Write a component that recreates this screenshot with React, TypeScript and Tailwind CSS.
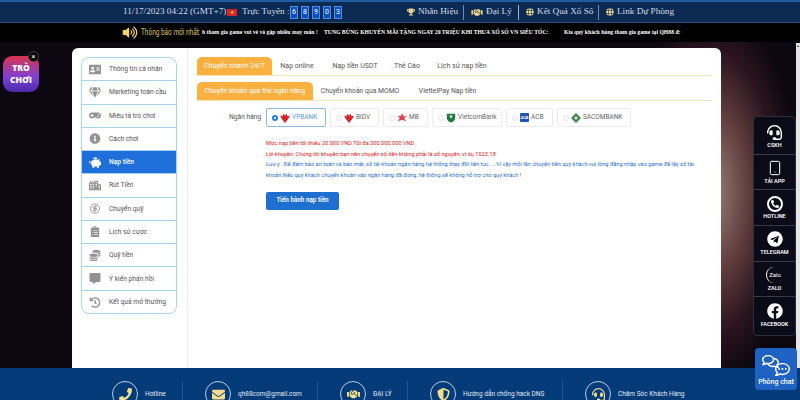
import {
  FaAddressCard,
  FaCity,
  FaClipboardList,
  FaCommentAlt,
  FaEnvelope,
  FaFacebook,
  FaGamepad,
  FaGem,
  FaHandshake,
  FaHeadset,
  FaHistory,
  FaInfoCircle,
  FaPhone,
  FaPiggyBank,
  FaRegCommentDots,
  FaRegComments,
  FaShieldAlt,
  FaTelegram,
  FaTrophy,
  FaVolumeUp,
  FaCoins,
  FaGlobe,
} from "react-icons/fa";
import { CircleDollarSign, Smartphone } from "lucide-react";

const sidebar = [
  { label: "Thông tin cá nhân", icon: FaAddressCard },
  { label: "Marketing toàn cầu", icon: FaGem },
  { label: "Miêu tả trò chơi", icon: FaGamepad },
  { label: "Cách chơi", icon: FaInfoCircle },
  { label: "Nạp tiền", icon: FaPiggyBank, active: true },
  { label: "Rút Tiền", icon: FaCity },
  { label: "Chuyển quỹ", icon: CircleDollarSign },
  { label: "Lịch sử cược", icon: FaClipboardList },
  { label: "Quỹ tiền", icon: FaCoins },
  { label: "Ý kiến phản hồi", icon: FaCommentAlt },
  { label: "Kết quả mở thưởng", icon: FaHistory },
];

const banks = [
  { name: "VPBANK", width: "w-[60px]", logo: "text-[#d8232a]", selected: true },
  { name: "BIDV", width: "w-[49px]", logo: "text-[#d8232a]" },
  { name: "MB", width: "w-[45px]", logo: "text-[#e0394a]" },
  { name: "VietcomBank", width: "w-[70px]", logo: "text-[#1f7a3d]" },
  { name: "ACB", width: "w-[47px]", logo: "text-[#1f55b0]" },
  { name: "SACOMBANK", width: "w-[74px]", logo: "text-[#3f8a4a]" },
];

const footer = [
  { label: "Hotline", icon: FaPhone, width: "w-[93px]" },
  { label: "qh88com@gmail.com", icon: FaEnvelope, width: "w-[135px]" },
  { label: "ĐẠI LÝ", icon: FaHandshake, width: "w-[90px]" },
  { label: "Hướng dẫn chống hack DNS", icon: FaShieldAlt, width: "w-[155px]" },
  { label: "Chăm Sóc Khách Hàng", icon: FaHeadset, width: "w-[150px]" },
];

const BankLogo = ({ name, className }: { name: string; className: string }) => {
  if (name === "ACB") {
    return (
      <span className="flex h-[9px] w-[9px] shrink-0 items-center justify-center rounded-[1px] bg-[#1f55b0] text-[4px] font-bold text-white">
        ACB
      </span>
    );
  }
  return (
    <svg viewBox="0 0 12 12" className={`h-[10px] w-[10px] shrink-0 fill-current ${className}`}>
      {name === "VietcomBank" && <path d="M1 1h10v5c0 3-3 5-5 5.500C4 11 1 9 1 6zM4 3l2 4 2-4z" />}
      {name === "SACOMBANK" && <path d="M6 0l6 6-6 6-6-6zM6 4L4 6l2 2 2-2z" />}
      {name === "MB" && <path d="M6 0l1.500 4L12 3 8.500 6 11 10 6 8l-5 2 2.500-4L0 3l4.500 1z" />}
      {(name === "VPBANK" || name === "BIDV") && (
        <path d="M6 12L2 7 0 3l3 1 1-3 2 2 2-2 1 3 3-1-2 4z" />
      )}
    </svg>
  );
};

const SocialItem = ({ label, children, last }: { label: string; children: React.ReactNode; last?: boolean }) => (
  <div className={`flex h-[35.700px] flex-col items-center justify-center ${last ? "" : "border-b border-[#3a3a48]"}`}>
    <span className="flex h-[17px] items-center justify-center">{children}</span>
    <span className="mt-[1px] whitespace-nowrap text-[5.500px] font-semibold leading-[7px]">{label}</span>
  </div>
);

const App = () => {
  return (
    <div className="relative flex h-[400px] w-[800px] flex-col overflow-hidden bg-[#0b0610] font-['Roboto',sans-serif]">
      {/* Top bar */}
      <header className="flex h-[23px] items-center whitespace-nowrap border-t-2 border-b border-t-[#1b5c9e] border-b-[#2b4f78] bg-[#0c2a52] pl-[123px] font-['Liberation_Serif',serif] text-[9.200px] text-[#d5dbe4]">
        <span className="w-[104px] shrink-0">11/17/2023 04:22 (GMT+7)</span>
        <span className="flex h-[7px] w-[10px] shrink-0 items-center justify-center bg-[#d8232a] text-[5px] leading-none text-[#ffd83a]">★</span>
        <span className="ml-[5px] w-[48px] shrink-0">Trực Tuyến :</span>
        <div className="flex shrink-0 gap-[3px]">
          {[6, 8, 9, 0, 3].map((digit, i) => (
            <span key={i} className="flex h-[13px] w-[8px] items-center justify-center border border-[#4d8fe0] bg-[#0b4fc0] font-['Roboto',sans-serif] text-[7px] text-white">
              {digit}
            </span>
          ))}
        </div>
        <nav className="ml-[65px] flex shrink-0 items-center">
          <FaTrophy className="h-[8px] w-[8px] text-[#e8d48a]" />
          <span className="ml-[3px] w-[38px]">Nhãn Hiệu</span>
          <span className="mx-[7px] h-[15px] w-px bg-[#6f8db0]" />
          <FaHandshake className="h-[9px] w-[12px] text-[#e8d48a]" />
          <span className="ml-[3px] w-[25px]">Đại Lý</span>
          <span className="mx-[7px] h-[15px] w-px bg-[#9fb6d0]" />
          <FaGlobe className="h-[8px] w-[8px] text-[#e8d48a]" />
          <span className="ml-[3px] w-[54px]">Kết Quả Xổ Số</span>
          <span className="mx-[7px] h-[15px] w-px bg-[#6f8db0]" />
          <FaGlobe className="h-[8px] w-[8px] text-[#e8d48a]" />
          <span className="ml-[3px]">Link Dự Phòng</span>
        </nav>
      </header>

      {/* Ticker */}
      <div className="flex h-[19px] items-center overflow-hidden whitespace-nowrap bg-black pl-[122px] font-['Liberation_Serif',serif] text-[5.700px] font-bold text-white">
        <FaVolumeUp className="h-[13px] w-[16px] shrink-0 text-[#f3d36b]" />
        <span className="ml-[3px] w-[61px] shrink-0 origin-left scale-x-[0.72] font-['Roboto',sans-serif] text-[9px] font-normal text-[#d9c46a]">Thông báo mới nhất:</span>
        <span className="w-[122px] shrink-0">h tham gia game vui vẻ và gặp nhiều may mắn !</span>
        <span className="w-[240px] shrink-0">TUNG BỪNG KHUYẾN MÃI TẶNG NGAY 20 TRIỆU KHI THUA XỔ SỐ VN SIÊU TỐC:</span>
        <span className="shrink-0">Kìa quý khách hàng tham gia game tại QH88 đ:</span>
      </div>

      {/* Main */}
      <main className="flex min-h-0 flex-1 bg-[radial-gradient(ellipse_85px_190px_at_712px_150px,#9a8078_0%,#5c3a3a_45%,#2a141e_75%,#0d0712_100%)] pl-[72px] pt-[6px]">
        <div className="flex h-[320px] w-[649px] shrink-0 rounded-t-[6px] bg-white pl-[9px]">
          {/* Sidebar */}
          <aside className="mt-[9px] h-[257px] w-[96px] shrink-0 overflow-hidden rounded-[8px] border border-[#a6d3ee]">
            {sidebar.map((item) => {
              const Icon = item.icon;
              return (
                <div
                  key={item.label}
                  className={`flex h-[23.270px] items-center whitespace-nowrap border-b border-[#a6d3ee] pl-[6px] text-[6.700px] last:border-b-0 ${item.active ? "bg-[#1e6fd9] font-medium text-white" : "text-[#555]"}`}
                >
                  <span className="flex w-[14px] shrink-0 justify-center">
                    <Icon className={`h-[11px] w-[12px] ${item.active ? "text-white" : "text-[#929292]"}`} />
                  </span>
                  <span className="ml-[7px]">{item.label}</span>
                </div>
              );
            })}
          </aside>

          {/* Content */}
          <section className="ml-[10px] min-w-0 flex-1 border-l border-[#ececec] px-[9px] pt-[9px]">
            <div className="flex h-[19px] whitespace-nowrap border-b border-[#f5e6b8] text-[7px] text-[#555]">
              <span className="flex w-[75px] items-center justify-center rounded-t-[5px] bg-[#fbb040] text-white">Chuyển nhanh 24/7</span>
              <span className="flex w-[50px] items-center justify-center">Nạp online</span>
              <span className="flex w-[66px] items-center justify-center">Nạp tiền USDT</span>
              <span className="flex w-[38px] items-center justify-center">Thẻ Cào</span>
              <span className="ml-[2px] flex w-[68px] items-center justify-center">Lịch sử nạp tiền</span>
            </div>
            <div className="mt-[6px] flex h-[19px] whitespace-nowrap border-b border-[#f5e6b8] text-[6.800px] text-[#555]">
              <span className="flex w-[116px] items-center justify-center rounded-t-[5px] bg-[#fbb040] text-white">Chuyển khoản qua thẻ ngân hàng</span>
              <span className="flex w-[94px] items-center justify-center">Chuyển khoản qua MOMO</span>
              <span className="flex w-[81px] items-center justify-center">ViettelPay Nạp tiền</span>
            </div>

            <div className="mt-[7px] flex h-[19px] items-center text-[7px] text-[#555]">
              <span className="ml-[32px] w-[37px] shrink-0 whitespace-nowrap text-[6.700px]">Ngân hàng</span>
              <div className="flex gap-[4px]">
                {banks.map((bank) => (
                  <div
                    key={bank.name}
                    className={`flex h-[19px] shrink-0 items-center rounded-[2px] border pl-[5px] ${bank.width} ${bank.selected ? "border-[#8fb8e0]" : "border-[#ececec]"}`}
                  >
                    <span className={`mr-[2px] h-[6px] w-[6px] shrink-0 rounded-full ${bank.selected ? "border-2 border-[#2a7fd6] bg-white" : "border border-[#e4e4e4]"}`} />
                    <BankLogo name={bank.name} className={bank.logo} />
                    <span className={`ml-[2px] whitespace-nowrap text-[6.500px] ${bank.selected ? "text-[#5b9bdc]" : "text-[#666]"}`}>{bank.name}</span>
                  </div>
                ))}
              </div>
            </div>

            <div className="ml-[69px] mt-[11px] whitespace-nowrap text-[5.650px] leading-[10.700px]">
              <p className="text-[#e02020]">Mức nạp tiền tối thiểu 20.000 VND Tối đa 300.000.000 VND</p>
              <p className="text-[#e02020]">Lời khuyên: Chúng tôi khuyên bạn nên chuyển số tiền không phải là số nguyên, ví dụ 1023.18</p>
              <p className="text-[#2a6fd0]">Lưu ý : Để đảm bảo an toàn và bảo mật, số tài khoản ngân hàng hệ thống thay đổi liên tục ....Vì vậy mỗi lần chuyển tiền quý khách vui lòng đăng nhập vào game để lấy số tài</p>
              <p className="text-[#2a6fd0]">khoản.Nếu quý khách chuyển khoản vào ngân hàng đã đóng, hệ thống sẽ không hỗ trợ cho quý khách !</p>
            </div>

            <button className="ml-[69px] mt-[11px] h-[18px] w-[73px] whitespace-nowrap rounded-[2px] bg-[#1f6fd0] text-[6.300px] font-semibold text-white">
              Tiến hành nạp tiền
            </button>
          </section>
        </div>
      </main>

      {/* Footer */}
      <footer className="flex h-[32px] shrink-0 items-start bg-[#033a78] pl-[90px] pt-[13px]">
        {footer.map((item, i) => {
          const Icon = item.icon;
          return (
            <div key={item.label} className={`flex h-[19px] shrink-0 items-start pl-[22px] ${item.width} ${i < footer.length - 1 ? "border-r border-[#1d5590]" : ""}`}>
              <span className="flex h-[26px] w-[26px] shrink-0 items-center justify-center rounded-full border border-[#b8cde2]">
                <Icon className="h-[13px] w-[13px] text-[#f3dd8c]" />
              </span>
              <span className="ml-[7px] mt-[8px] whitespace-nowrap text-[6.500px] leading-[10px] text-[#e3ebf5]">{item.label}</span>
            </div>
          );
        })}
      </footer>

      {/* Floating game badge */}
      <div className="absolute left-[3px] top-[56px] flex h-[36px] w-[36px] flex-col items-center justify-center rounded-[9px] bg-[linear-gradient(180deg,#d9344f_0%,#7d3fd6_60%,#4a2aa8_100%)] font-['Open_Sans',sans-serif] text-[8.500px] font-extrabold leading-[12px] text-white">
        <span>TRÒ</span>
        <span>CHƠI</span>
      </div>
      <span className="absolute left-[28px] top-[51px] flex h-[11px] w-[11px] items-center justify-center rounded-full border border-[#444] bg-black text-[8px] leading-none text-white">×</span>

      {/* Scrollbar */}
      <div className="absolute right-0 top-[43px] flex h-[325px] w-[4px] justify-center bg-[#e6e6e6] text-[4px] leading-[6px] text-[#555]">▲</div>

      {/* Social panel */}
      <div className="absolute left-[753px] top-[116px] flex h-[220px] w-[43px] flex-col rounded-[4px] border border-[#2a2d3a] bg-[#0b0b18] pt-[2px] text-white">
        <SocialItem label="CSKH">
          <FaHeadset className="h-[15px] w-[15px]" />
        </SocialItem>
        <SocialItem label="TẢI APP">
          <Smartphone className="h-[16px] w-[16px]" strokeWidth={1.5} />
        </SocialItem>
        <SocialItem label="HOTLINE">
          <span className="flex h-[16px] w-[16px] items-center justify-center rounded-full border-2 border-white">
            <FaPhone className="h-[8px] w-[8px] -scale-x-100" />
          </span>
        </SocialItem>
        <SocialItem label="TELEGRAM">
          <FaTelegram className="h-[16px] w-[16px]" />
        </SocialItem>
        <SocialItem label="ZALO">
          <span className="flex h-[16px] w-[18px] items-center justify-center rounded-full border-l border-white text-[6px] leading-none">Zalo</span>
        </SocialItem>
        <SocialItem label="FACEBOOK" last>
          <FaFacebook className="h-[16px] w-[16px]" />
        </SocialItem>
      </div>

      {/* Chat button */}
      <div className="absolute left-[755px] top-[348px] flex h-[42px] w-[42px] flex-col items-center justify-center rounded-[4px] bg-[#1e63c4] text-white">
        <span className="relative h-[24px] w-[28px]">
          <FaRegCommentDots className="absolute bottom-0 right-0 h-[15px] w-[15px]" />
          <FaRegComments className="absolute left-0 top-0 h-[17px] w-[17px]" />
        </span>
        <span className="mt-[1px] whitespace-nowrap text-[7px] font-medium leading-[8px]">Phòng chat</span>
      </div>
    </div>
  );
};

export default App;
